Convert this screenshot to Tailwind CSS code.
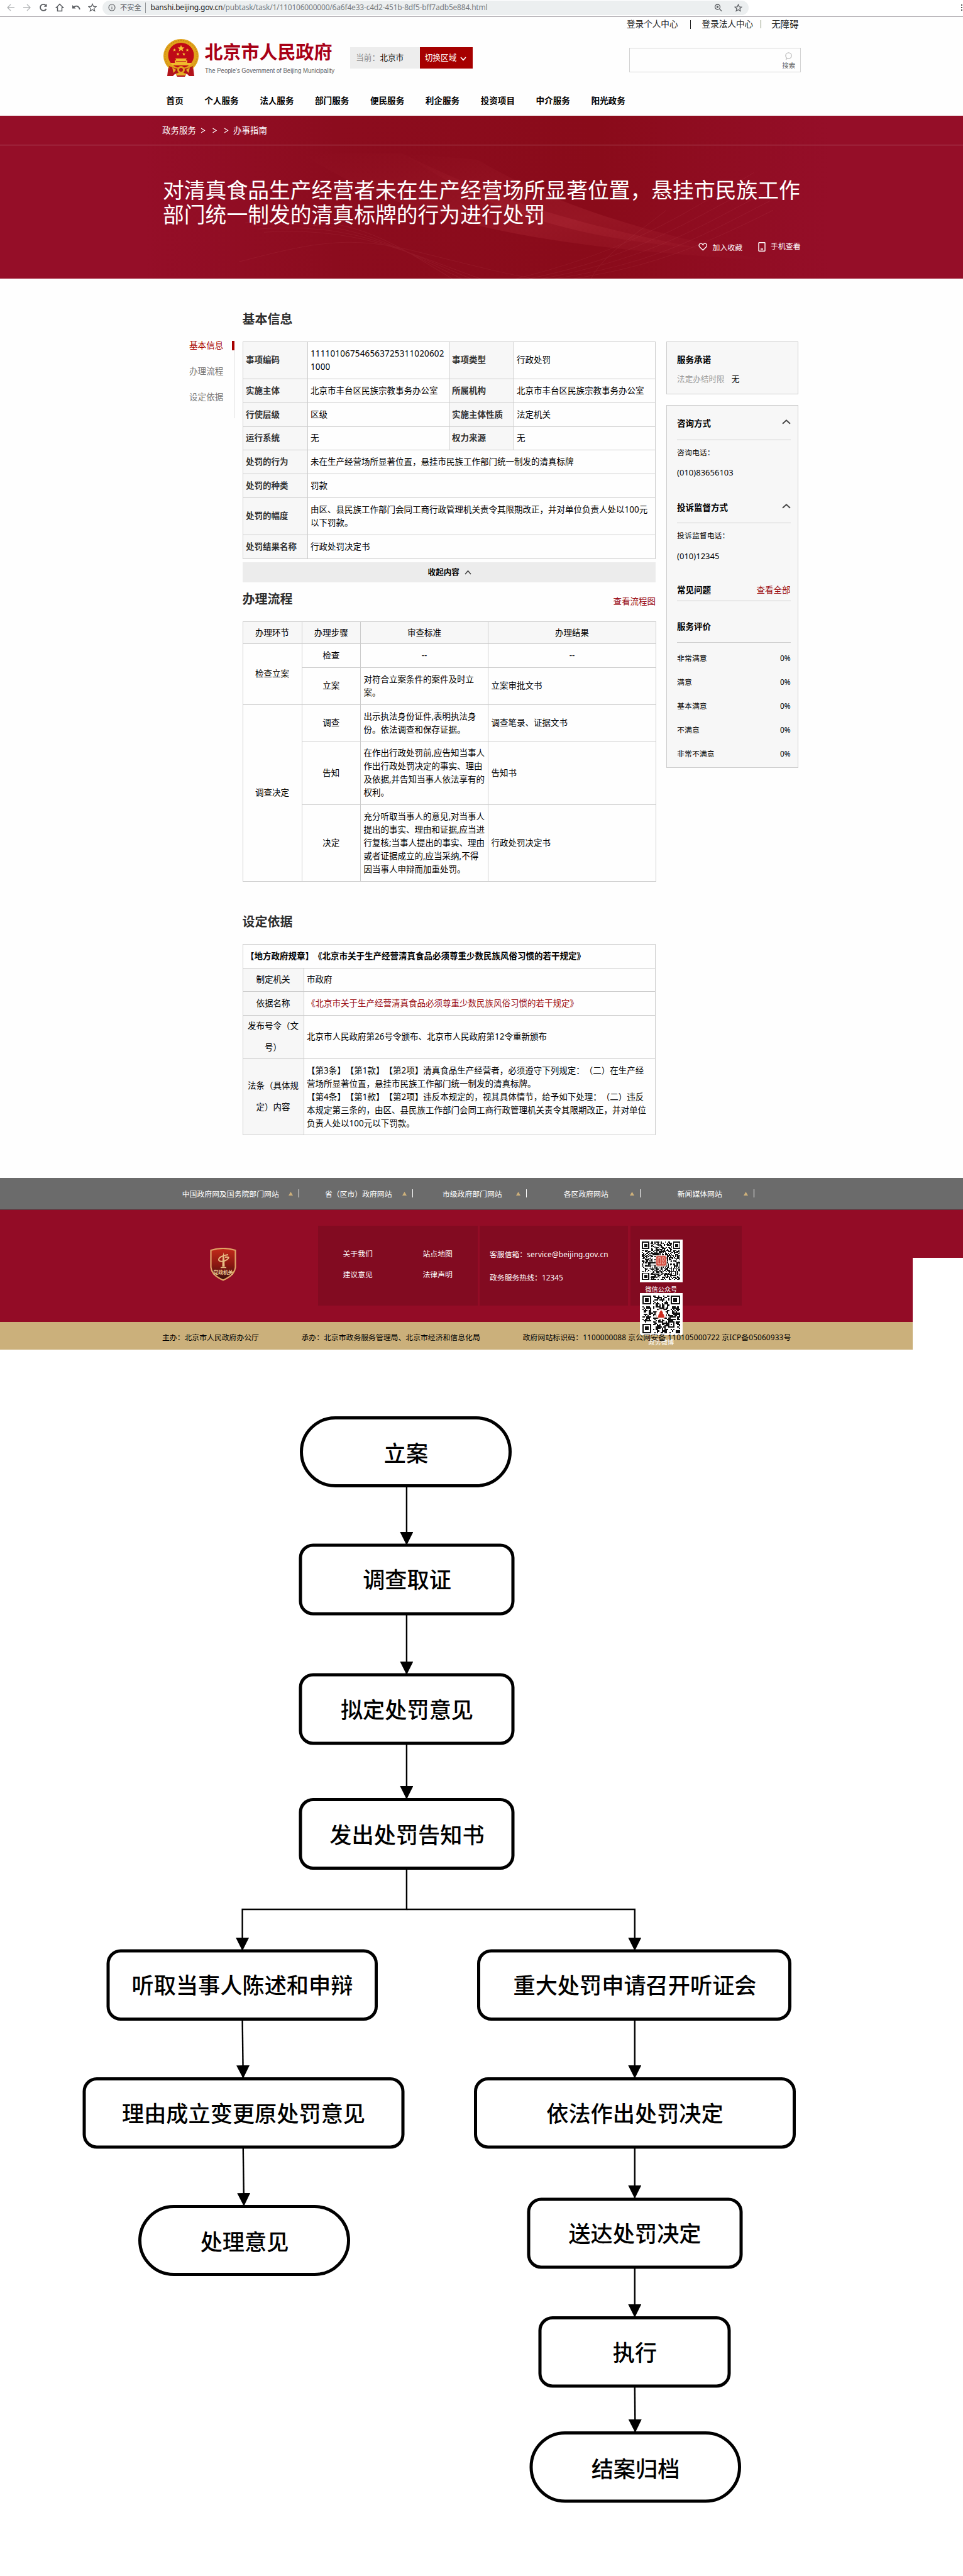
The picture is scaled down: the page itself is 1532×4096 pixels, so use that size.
<!DOCTYPE html>
<html lang="zh-CN">
<head>
<meta charset="utf-8">
<title>办事指南 - 北京市人民政府</title>
<script src="https://cdn.jsdelivr.net/npm/@tailwindcss/browser@4"></script>
</head>
<body class="w-[1532px] h-[4096px] overflow-hidden bg-[#fefefe] text-black font-['Noto_Sans','Noto_Sans_CJK_SC',sans-serif] [text-spacing-trim:space-all] whitespace-nowrap">

<!-- browser toolbar -->
<div class="flex h-[27px] items-start border-b border-[#a5a1a7] bg-white">
  <div class="flex h-[24px] w-[163px] items-center gap-[12px] pl-[10px] text-[#5a5d61]">
    <svg class="w-[14px] h-[14px] shrink-0 text-[#b4b6b8]" viewBox="0 0 14 14" fill="none" stroke="currentColor" stroke-width="1.4"><path d="M13 7H2M7 2L2 7l5 5"/></svg>
    <svg class="w-[14px] h-[14px] shrink-0 text-[#b4b6b8]" viewBox="0 0 14 14" fill="none" stroke="currentColor" stroke-width="1.4"><path d="M1 7h11M7 2l5 5-5 5"/></svg>
    <svg class="w-[14px] h-[14px] shrink-0" viewBox="0 0 14 14" fill="none" stroke="currentColor" stroke-width="1.8"><path d="M11.6 9A5 5 0 1 1 11 3.8"/><path d="M12.5 1v4.8H7.7z" fill="currentColor" stroke="none"/></svg>
    <svg class="w-[14px] h-[14px] shrink-0" viewBox="0 0 14 14" fill="none" stroke="currentColor" stroke-width="1.5"><path d="M7 1.5L1.5 7.2h2V12.500h7V7.200h2z"/></svg>
    <svg class="w-[14px] h-[14px] shrink-0" viewBox="0 0 14 14" fill="none" stroke="currentColor" stroke-width="1.8"><path d="M3 6.500C7 3 11.500 4.500 13 10"/><path d="M1 3v5.500h5.500z" fill="currentColor" stroke="none"/></svg>
    <svg class="w-[14px] h-[14px] shrink-0" viewBox="0 0 14 14" fill="none" stroke="currentColor" stroke-width="1.2"><path d="M7 1.300l1.700 3.900 4.200.4-3.200 2.800.95 4.100L7 10.300l-3.650 2.200.95-4.100L1.100 5.600l4.200-.4z"/></svg>
  </div>
  <div class="flex h-[23px] mt-[0.500px] w-[1028px] items-center rounded-full bg-[#eceff0] pl-[9px] pr-[10px]">
    <svg class="w-[12px] h-[12px] shrink-0 text-[#5a5d61]" viewBox="0 0 12 12" fill="none" stroke="currentColor" stroke-width="1.100"><circle cx="6" cy="6" r="5"/><path d="M6 5.200v3.600M6 3v1.200"/></svg>
    <span class="ml-[7px] text-[11.200px] text-[#5f6368]">不安全</span>
    <span class="ml-[6px] h-[17px] w-px bg-[#8f9396]"></span>
    <span class="ml-[8px] text-[12px] text-[#777b80] tracking-[-0.200px]"><span class="text-[#202124]">banshi.beijing.gov.cn</span>/pubtask/task/1/110106000000/6a6f4e33-c4d2-451b-8df5-bff7adb5e884.html</span>
    <span class="ml-auto flex items-center gap-[19px] text-[#5a5d61]">
      <svg class="w-[13px] h-[13px]" viewBox="0 0 13 13" fill="none" stroke="currentColor" stroke-width="1.300"><circle cx="5.500" cy="5" r="4"/><path d="M8.500 8l3.700 3.800M5.500 3.200v3.600M3.700 5h3.600"/></svg>
      <svg class="w-[13px] h-[13px]" viewBox="0 0 14 14" fill="none" stroke="currentColor" stroke-width="1.300"><path d="M7 1.300l1.700 3.900 4.200.4-3.200 2.800.95 4.100L7 10.300l-3.650 2.200.95-4.100L1.100 5.600l4.200-.4z"/></svg>
    </span>
  </div>
  <div class="ml-auto mr-[1px] flex flex-col gap-[2px] pt-[7px]"><i class="size-[2px] bg-[#555]"></i><i class="size-[2px] bg-[#555]"></i><i class="size-[2px] bg-[#555]"></i></div>
</div>

<!-- site header -->
<header class="flex h-[156.600px] flex-col">
  <div class="flex h-[23px] items-center pl-[997px] text-[13.600px] text-[#222]">
    <span>登录个人中心</span><i class="ml-[19px] h-[14px] w-px bg-[#222]"></i>
    <span class="ml-[18px]">登录法人中心</span><i class="ml-[12px] h-[13px] w-px bg-[#7d8a6a]"></i>
    <span class="ml-[16px] text-[14.500px]">无障碍</span>
  </div>
  <div class="flex h-[86px] items-start pl-[260px] pt-[12px]">
    <svg class="w-[56px] h-[60px] shrink-0" viewBox="0 0 56 60">
      <path d="M8 43L6 59h9l4-4 3 5h12l3-5 4 4h8l-2-16z" fill="#b3131b"/>
      <ellipse cx="28" cy="27" rx="28" ry="27" fill="#e0a21b"/>
      <ellipse cx="28" cy="27" rx="25.500" ry="24.500" fill="none" stroke="#b97b12" stroke-width="1" stroke-dasharray="2 2"/>
      <ellipse cx="28" cy="26" rx="20.500" ry="20" fill="#bf0a17"/>
      <path d="M28 9.500l1.500 3.700 4 .2-3.100 2.500 1.100 3.800L28 17.500l-3.500 2.200 1.100-3.800-3.100-2.500 4-.2z" fill="#f6c636"/>
      <g fill="#f6c636"><path id="s" d="M17.500 15l.7 1.700 1.800.1-1.400 1.200.5 1.700-1.600-1-1.600 1 .5-1.700-1.400-1.200 1.800-.1z"/><use href="#s" x="20.500"/><use href="#s" x="5.500" y="6.500"/><use href="#s" x="15" y="6.500"/></g>
      <path d="M19 31h18l-1.500 3h2.500v4h7l-3 4H14l-3-4h7v-4h2.500z" fill="#f0b92c"/>
      <path d="M20 35.500h16" stroke="#bf0a17" stroke-width=".8"/>
      <path d="M9 43q19 9 38 0l-1 8q-18 7-36 0z" fill="#b3131b"/>
      <circle cx="28" cy="49" r="6" fill="#e0a21b"/><circle cx="28" cy="49" r="3" fill="#b3131b"/>
      <path d="M14 45l6 4-4 5zM42 45l-6 4 4 5zM20 55l8-2 8 2v3H20z" fill="#e6ad26"/>
    </svg>
    <div class="ml-[9.500px] w-[231.700px] shrink-0">
      <div class="mt-[2px] h-[38px] text-[29px] leading-[38px] font-bold text-[#a80016]">北京市人民政府</div>
      <svg class="mt-[2px] h-[18px] w-[224px] overflow-visible"><text x="0" y="11.500" font-family="Liberation Sans" font-size="11" textLength="206" lengthAdjust="spacingAndGlyphs" fill="#666">The People's Government of Beijing Municipality</text></svg>
    </div>
    <div class="mt-[13px] flex h-[34px] shrink-0 items-center bg-[#ededed] text-[12.700px]">
      <div class="w-[110.500px] pl-[9px]"><span class="text-[#888]">当前：</span>北京市</div>
      <div class="flex h-full w-[84px] items-center bg-[#a60000] pl-[8px] text-white">切换区域<svg class="ml-[6px] mt-[2px] h-[7px] w-[10px]" viewBox="0 0 10 7" fill="none" stroke="#fff" stroke-width="1.600"><path d="M1 1l4 4.500L9 1"/></svg></div>
    </div>
    <div class="ml-[249.500px] mt-[13.800px] flex h-[39.500px] w-[273px] shrink-0 justify-end border border-[#d3d3d3] pr-[8px] pt-[6px]">
      <div class="flex flex-col items-center">
        <svg class="h-[13px] w-[11px]" viewBox="0 0 11 13" fill="none" stroke="#bbb" stroke-width="1.300"><circle cx="5.500" cy="5.500" r="4.600"/><path d="M3 9.300L1.300 12.300"/></svg>
        <span class="mt-[1px] text-[10.500px] leading-[15px] text-[#666]">搜索</span>
      </div>
    </div>
  </div>
  <nav class="flex gap-[33.500px] pl-[264.600px] pt-[14px] text-[13.600px] leading-[20px] font-bold">
    <span>首页</span><span>个人服务</span><span>法人服务</span><span>部门服务</span><span>便民服务</span><span>利企服务</span><span>投资项目</span><span>中介服务</span><span>阳光政务</span>
  </nav>
</header>

<!-- title banner -->
<section class="relative h-[259.400px] bg-[#950e28] text-white">
  <svg class="absolute inset-0 h-full w-full" viewBox="0 0 1532 259" preserveAspectRatio="none">
    <defs>
      <linearGradient id="bn" x1="0" x2="1"><stop offset=".15" stop-color="#950e28"/><stop offset=".35" stop-color="#8c0c1e"/><stop offset=".62" stop-color="#8a0b1a"/><stop offset=".86" stop-color="#950e28"/></linearGradient>
      <linearGradient id="sw" x1="0" x2="1" y1="0" y2="1"><stop offset="0" stop-color="#c8404a" stop-opacity="0"/><stop offset=".6" stop-color="#c8404a" stop-opacity=".2"/><stop offset="1" stop-color="#c8404a" stop-opacity="0"/></linearGradient>
    </defs>
    <rect width="1532" height="259" fill="url(#bn)"/>
    <path d="M480 60C650 170 860 210 1230 230C980 190 820 150 640 60z" fill="url(#sw)"/>
    <path d="M640 60C780 150 900 200 1180 215C1000 180 860 130 760 70z" fill="url(#sw)"/>
    <g fill="none" stroke="#d0606a" stroke-opacity=".12">
      <path d="M390 170C560 150 620 200 720 259M400 175C560 160 620 205 735 259M410 180C560 168 630 210 750 259M420 185C570 176 640 215 765 259M380 232C500 200 560 190 660 215S800 250 850 259"/>
      <path d="M820 259C1000 215 1080 160 1200 90M840 259C1010 225 1090 170 1215 105M860 259C1020 230 1100 185 1220 120M880 259C1030 238 1110 195 1225 135M910 259C1040 240 1120 205 1230 150M940 259C960 220 1010 190 1060 150"/>
    </g>
    <path d="M0 46.800h1532" stroke="#fff" stroke-opacity=".22"/>
  </svg>
  <div class="relative flex h-full flex-col">
    <div class="flex h-[47px] items-center pl-[257.900px] text-[13.500px]"><span>政务服务</span>
      <svg class="ml-[7px] h-[9px] w-[46px]" viewBox="0 0 46 9" fill="none" stroke="#fff" stroke-width="1.200"><path d="M1 1l5.500 3.500L1 8M19.500 1L25 4.500 19.500 8M38 1l5.500 3.500L38 8"/></svg>
      <span class="ml-[6px]">办事指南</span></div>
    <h1 class="mt-[52.500px] pl-[259px] text-[33.800px] leading-[38.400px]">对清真食品生产经营者未在生产经营场所显著位置，悬挂市民族工作<br>部门统一制发的清真标牌的行为进行处罚</h1>
    <div class="mt-[23px] flex items-center pl-[1110.500px] text-[11.900px] leading-[20px]">
      <svg class="h-[13px] w-[14.500px]" viewBox="0 0 15 13" fill="none" stroke="#fff" stroke-width="1.400"><path d="M7.500 12L2 6.500C0 4 1.500 1 4.200 1 6 1 7 2 7.500 3.200 8 2 9 1 10.800 1 13.500 1 15 4 13 6.500z"/></svg>
      <span class="ml-[8.500px]">加入收藏</span>
      <svg class="ml-[25px] h-[15px] w-[12px]" viewBox="0 0 12 15" fill="none" stroke="#fff" stroke-width="1.400"><rect x="1" y=".8" width="10" height="13.400" rx=".6"/><path d="M4 11h4" stroke-width="1.600"/></svg>
      <span class="ml-[8px] -mt-[3px]">手机查看</span>
    </div>
  </div>
</section>

<!-- page content -->
<main class="flex h-[1429.700px] pl-[301px]">
  <nav class="mt-[99px] h-[123px] w-[71.500px] border-r border-[#ddd] text-[13.600px] leading-[40.800px] text-[#777]">
    <div class="-mt-[13px] h-[40.800px] text-[#a60000] relative">基本信息<i class="absolute right-[-1px] top-[13px] h-[15.500px] w-[3.500px] bg-[#a60000]"></i></div>
    <div>办理流程</div>
    <div>设定依据</div>
  </nav>

  <div class="ml-[13px] w-[657.500px] text-[13.500px] leading-[21px]">
    <h2 class="pt-[45px] text-[20px] leading-[40px] font-bold text-[#2f2f2f]">基本信息</h2>
    <table class="mt-[14.600px] w-[656px] table-fixed border-collapse [&_td]:border [&_td]:border-[#ccc] [&_td]:py-0 [&_td]:pr-0 [&_td]:pl-[4.500px] [&_th]:border [&_th]:border-[#ccc] [&_th]:bg-[#f7f7f7] [&_th]:py-0 [&_th]:pr-0 [&_th]:pl-[4.500px] [&_th]:text-left [&_th]:font-bold [&_th]:text-[#333]">
      <colgroup><col class="w-[103px]"><col class="w-[225px]"><col class="w-[103px]"><col class="w-[225px]"></colgroup>
      <tr class="h-[59px]"><th>事项编码</th><td class="tracking-[0.150px]">111101067546563725311020602<br>1000</td><th>事项类型</th><td>行政处罚</td></tr>
      <tr class="h-[38px]"><th>实施主体</th><td>北京市丰台区民族宗教事务办公室</td><th>所属机构</th><td>北京市丰台区民族宗教事务办公室</td></tr>
      <tr class="h-[38px]"><th>行使层级</th><td>区级</td><th>实施主体性质</th><td>法定机关</td></tr>
      <tr class="h-[37.500px]"><th>运行系统</th><td>无</td><th>权力来源</th><td>无</td></tr>
      <tr class="h-[38px]"><th>处罚的行为</th><td colspan="3">未在生产经营场所显著位置，悬挂市民族工作部门统一制发的清真标牌</td></tr>
      <tr class="h-[38px]"><th>处罚的种类</th><td colspan="3">罚款</td></tr>
      <tr class="h-[58.500px]"><th>处罚的幅度</th><td colspan="3">由区、县民族工作部门会同工商行政管理机关责令其限期改正，并对单位负责人处以100元<br>以下罚款。</td></tr>
      <tr class="h-[38px]"><th>处罚结果名称</th><td colspan="3">行政处罚决定书</td></tr>
    </table>
    <div class="mt-[5px] flex h-[32.500px] items-center justify-center bg-[#ececec] pl-[2px] text-[12.600px] font-bold">收起内容<svg class="ml-[8px] h-[8px] w-[11px]" viewBox="0 0 11 8" fill="none" stroke="#444" stroke-width="1.600"><path d="M1 7l4.500-5.200L10 7"/></svg></div>

    <div class="mt-[6.500px] flex h-[40px] items-center justify-between"><h2 class="text-[20px] font-bold text-[#2f2f2f]">办理流程</h2><span class="pt-[8px] text-[#9a0a10]">查看流程图</span></div>
    <table class="mt-[15.700px] w-[657.500px] table-fixed border-collapse text-center [&_td]:border [&_td]:border-[#ccc] [&_td]:p-0 [&_th]:border [&_th]:border-[#ccc] [&_th]:bg-[#f7f7f7] [&_th]:p-0 [&_th]:font-normal">
      <colgroup><col class="w-[94px]"><col class="w-[93.500px]"><col class="w-[203px]"><col class="w-[267px]"></colgroup>
      <tr class="h-[34.600px]"><th>办理环节</th><th>办理步骤</th><th>审查标准</th><th>办理结果</th></tr>
      <tr class="h-[38px]"><td rowspan="2">检查立案</td><td>检查</td><td>--</td><td>--</td></tr>
      <tr class="h-[58.800px] [&>td:nth-child(n+2)]:text-left [&>td:nth-child(n+2)]:pl-[4.500px]"><td>立案</td><td>对符合立案条件的案件及时立<br>案。</td><td>立案审批文书</td></tr>
      <tr class="h-[58.800px] [&>td:nth-child(n+3)]:text-left [&>td:nth-child(n+3)]:pl-[4.500px]"><td rowspan="3">调查决定</td><td>调查</td><td>出示执法身份证件,表明执法身<br>份。依法调查和保存证据。</td><td>调查笔录、证据文书</td></tr>
      <tr class="h-[100.600px] [&>td:nth-child(n+2)]:text-left [&>td:nth-child(n+2)]:pl-[4.500px]"><td>告知</td><td>在作出行政处罚前,应告知当事人<br>作出行政处罚决定的事实、理由<br>及依据,并告知当事人依法享有的<br>权利。</td><td>告知书</td></tr>
      <tr class="h-[121.600px] [&>td:nth-child(n+2)]:text-left [&>td:nth-child(n+2)]:pl-[4.500px]"><td>决定</td><td>充分听取当事人的意见,对当事人<br>提出的事实、理由和证据,应当进<br>行复核;当事人提出的事实、理由<br>或者证据成立的,应当采纳,不得<br>因当事人申辩而加重处罚。</td><td>行政处罚决定书</td></tr>
    </table>

    <h2 class="mt-[44px] text-[20px] leading-[40px] font-bold text-[#2f2f2f]">设定依据</h2>
    <table class="mt-[15px] w-[656px] table-fixed border-collapse [&_td]:border [&_td]:border-[#ccc] [&_td]:py-0 [&_td]:pr-0 [&_td]:pl-[4.500px] [&_th]:border [&_th]:border-[#ccc] [&_th]:bg-[#f7f7f7] [&_th]:p-0 [&_th]:font-normal [&_th]:leading-[33.800px]">
      <colgroup><col class="w-[97px]"><col class="w-[559px]"></colgroup>
      <tr class="h-[38px]"><td colspan="2" class="font-bold">【地方政府规章】《北京市关于生产经营清真食品必须尊重少数民族风俗习惯的若干规定》</td></tr>
      <tr class="h-[37.500px]"><th>制定机关</th><td>市政府</td></tr>
      <tr class="h-[38px]"><th>依据名称</th><td class="text-[#9a0a10]">《北京市关于生产经营清真食品必须尊重少数民族风俗习惯的若干规定》</td></tr>
      <tr class="h-[68.500px]"><th>发布号令（文<br>号）</th><td>北京市人民政府第26号令颁布、北京市人民政府第12令重新颁布</td></tr>
      <tr class="h-[121.600px]"><th>法条（具体规<br>定）内容</th><td>【第3条】【第1款】【第2项】清真食品生产经营者，必须遵守下列规定：（二）在生产经<br>营场所显著位置，悬挂市民族工作部门统一制发的清真标牌。<br>【第4条】【第1款】【第2项】违反本规定的，视其具体情节，给予如下处理：（二）违反<br>本规定第三条的，由区、县民族工作部门会同工商行政管理机关责令其限期改正，并对单位<br>负责人处以100元以下罚款。</td></tr>
    </table>
  </div>

  <aside class="ml-[16.600px] w-[210.500px] pt-[100px] text-[11.900px]">
    <div class="h-[84.500px] border border-[#ccc] bg-[#f7f7f7] pl-[16.500px] pt-[18.500px]">
      <h3 class="text-[13.500px] leading-[20px] font-bold">服务承诺</h3>
      <p class="mt-[11px] text-[12.600px] leading-[20px]"><span class="mr-[11px] text-[#999]">法定办结时限</span>无</p>
    </div>
    <div class="mt-[17px] h-[576.500px] border border-[#ccc] bg-[#f7f7f7] pl-[16.500px] pr-[11.500px] leading-[20px]">
      <div class="flex h-[54.500px] items-center justify-between border-b border-[#ccc] pt-[2px]"><h3 class="text-[13.500px] font-bold">咨询方式</h3><svg class="-mt-[5px] h-[9px] w-[14px]" viewBox="0 0 14 9" fill="none" stroke="#444" stroke-width="1.900"><path d="M1 7.800l6-5.600 6 5.600"/></svg></div>
      <p class="pt-[9px]">咨询电话：</p>
      <p class="mt-[12.500px] text-[13px]">(010)83656103</p>
      <div class="mt-[17px] flex h-[54px] items-center justify-between border-b border-[#ccc] pt-[4px]"><h3 class="text-[13.500px] font-bold">投诉监督方式</h3><svg class="-mt-[4px] h-[9px] w-[14px]" viewBox="0 0 14 9" fill="none" stroke="#444" stroke-width="1.900"><path d="M1 7.800l6-5.600 6 5.600"/></svg></div>
      <p class="pt-[9px]">投诉监督电话：</p>
      <p class="mt-[12.500px] text-[13px]">(010)12345</p>
      <div class="mt-[25px] flex h-[37.500px] items-center justify-between border-b border-[#ccc] pt-[2.500px] text-[13.500px]"><h3 class="font-bold">常见问题</h3><span class="text-[#9a0a10]">查看全部</span></div>
      <div class="flex h-[66px] items-center border-b border-[#ccc] pt-[15px] text-[13.500px]"><h3 class="font-bold">服务评价</h3></div>
      <div class="flex flex-col gap-[18px] pt-[14px]">
        <p class="flex justify-between"><span>非常满意</span><span>0%</span></p>
        <p class="flex justify-between"><span>满意</span><span>0%</span></p>
        <p class="flex justify-between"><span>基本满意</span><span>0%</span></p>
        <p class="flex justify-between"><span>不满意</span><span>0%</span></p>
        <p class="flex justify-between"><span>非常不满意</span><span>0%</span></p>
      </div>
    </div>
  </aside>
</main>

<!-- footer -->
<footer class="relative text-[11.850px] leading-[20px] text-white">
  <div class="h-[51px] border-b border-[#5c2a34] bg-[#6b6b6b]">
    <div class="grid h-full grid-cols-[218px_181px_181px_181px_181px] pl-[258px] [&>div]:flex [&>div]:items-center [&>div]:justify-end [&_b]:font-normal [&_b]:flex-1 [&_b]:text-center [&_svg]:w-[7px] [&_svg]:h-[6px] [&_svg]:mr-[9.500px] [&_i]:h-[13px] [&_i]:w-px [&_i]:bg-white">
      <div><b class="pl-[17px]">中国政府网及国务院部门网站</b><svg viewBox="0 0 7 6"><path d="M3.500 0L7 6H0z" fill="#cdb07a"/></svg><i></i></div>
      <div><b class="pl-[25px]">省（区市）政府网站</b><svg viewBox="0 0 7 6"><path d="M3.500 0L7 6H0z" fill="#cdb07a"/></svg><i></i></div>
      <div><b class="pl-[25px]">市级政府部门网站</b><svg viewBox="0 0 7 6"><path d="M3.500 0L7 6H0z" fill="#cdb07a"/></svg><i></i></div>
      <div><b class="pl-[25px]">各区政府网站</b><svg viewBox="0 0 7 6"><path d="M3.500 0L7 6H0z" fill="#cdb07a"/></svg><i></i></div>
      <div><b class="pl-[25px]">新闻媒体网站</b><svg viewBox="0 0 7 6"><path d="M3.500 0L7 6H0z" fill="#cdb07a"/></svg><i></i></div>
    </div>
  </div>
  <div class="flex h-[178.600px] bg-[#930c26] pl-[334px] pt-[25.800px]">
    <svg class="mt-[35px] h-[53px] w-[42px]" viewBox="0 0 42 53">
      <defs><linearGradient id="sh" x2="0" y2="1"><stop offset="0" stop-color="#c32a1a"/><stop offset=".5" stop-color="#8c1712"/><stop offset="1" stop-color="#3a0f0c"/></linearGradient></defs>
      <path d="M1.500 4Q21-2 40.500 4v27Q39 44 21 51.500 3 44 1.500 31z" fill="url(#sh)" stroke="#e0a467" stroke-width="2.200"/>
      <path d="M19.500 30h4l-.6-14-1.400-9-1.400 9z" fill="#e8bd84"/><path d="M17 31.500h9" stroke="#e8bd84" stroke-width="1.500"/>
      <path d="M29 11c-8 1-15 4-15 8s9 3 13 0 4-5-3-4" fill="none" stroke="#e8bd84" stroke-width="2"/>
      <text x="21" y="42" text-anchor="middle" font-size="7.800" font-weight="700" fill="#ecc793">党政机关</text>
    </svg>
    <div class="ml-[130px] grid h-[126.800px] w-[254px] grid-cols-[127px_127px] content-start gap-y-[12.700px] bg-[#820b21] pl-[39.500px] pt-[33.500px]"><span>关于我们</span><span>站点地图</span><span>建议意见</span><span>法律声明</span></div>
    <div class="ml-[3px] h-[126.800px] w-[236px] bg-[#820b21] pl-[16px] pt-[35px]"><p>客服信箱：<span class="tracking-[0.150px]">service@beijing.gov.cn</span></p><p class="mt-[16.500px]">政务服务热线：12345</p></div>
    <div class="ml-[3.500px] h-[126.800px] w-[177.500px] bg-[#820b21] pl-[15.500px] pt-[21.500px] text-[10.200px]">
      <div class="flex w-[67.700px] flex-col items-center">
        <svg id="qr1" class="h-[67.700px] w-[67.700px] shrink-0" viewBox="0 0 41 41" shape-rendering="crispEdges"></svg>
        <span class="mt-[3px] mb-[-1px] h-[15px] leading-[17px]">微信公众号</span>
        <svg id="qr2" class="h-[67.700px] w-[67.700px] shrink-0" viewBox="0 0 33 33" shape-rendering="crispEdges"></svg>
        <span class="relative z-10 mt-[2px] leading-[19px]">政务微博</span>
      </div>
    </div>
  </div>
  <div class="absolute right-0 top-[127.300px] h-[149px] w-[79.800px] bg-white"></div>
  <div class="flex h-[43.500px] w-[1452px] items-center bg-[#cbb07b] pl-[258px] pt-[4px] text-black">
    <span class="w-[221.500px]">主办：北京市人民政府办公厅</span><span class="w-[352px]">承办：北京市政务服务管理局、北京市经济和信息化局</span><span class="relative z-10 tracking-[0.120px]">政府网站标识码：1100000088 京公网安备 110105000722 京ICP备05060933号</span>
  </div>
</footer>

<!-- process diagram -->
<section class="relative h-[1950px] bg-white text-[35.200px] font-medium">
  <svg class="absolute left-0 top-0 h-[1950px] w-[1532px]" viewBox="0 2146 1532 1950" fill="none" stroke="#000" stroke-width="2.400">
    <defs><marker id="ah" markerUnits="userSpaceOnUse" markerWidth="21" markerHeight="21" refX="20" refY="10.500" orient="auto"><path d="M0 0L21 10.500L0 21z" fill="#000" stroke="none"/></marker></defs>
    <g marker-end="url(#ah)">
      <path d="M646.900 2364V2456"/><path d="M646.900 2568V2662"/><path d="M646.900 2774V2860"/>
      <path d="M646.900 2972V3036H385.600V3101"/><path d="M646.900 3036H1009.800V3101"/>
      <path d="M385.600 3212L386.800 3304"/><path d="M386.800 3416L388 3507"/>
      <path d="M1009.800 3212V3304"/><path d="M1009.800 3416V3495"/><path d="M1009.800 3606V3684"/><path d="M1009.800 3796L1010.500 3867"/>
    </g>
    <g stroke-width="5" fill="#fff">
      <rect x="479.500" y="2254.500" width="332" height="108" rx="54"/>
      <rect x="478" y="2457" width="338" height="109" rx="20"/>
      <rect x="478" y="2663" width="338" height="109" rx="20"/>
      <rect x="478" y="2861.500" width="338" height="109" rx="20"/>
      <rect x="172" y="3102" width="426.500" height="108.500" rx="20"/>
      <rect x="761.500" y="3102" width="495" height="108.500" rx="20"/>
      <rect x="134" y="3305.500" width="507" height="108.500" rx="20"/>
      <rect x="756.500" y="3305.500" width="507" height="108.500" rx="20"/>
      <rect x="222.500" y="3508.500" width="332" height="108" rx="54"/>
      <rect x="841" y="3497" width="338" height="108" rx="20"/>
      <rect x="859" y="3685.500" width="301" height="108.500" rx="20"/>
      <rect x="845" y="3868.500" width="331.500" height="108.500" rx="54"/>
    </g>
    <g fill="#000" stroke="none" text-anchor="middle">
      <text x="646" y="2323.500">立案</text><text x="647.500" y="2525">调查取证</text><text x="647.500" y="2731.500">拟定处罚意见</text><text x="647.500" y="2931">发出处罚告知书</text>
      <text x="385.500" y="3170">听取当事人陈述和申辩</text><text x="1010" y="3170">重大处罚申请召开听证会</text>
      <text x="387.500" y="3373.500">理由成立变更原处罚意见</text><text x="1010" y="3373.500">依法作出处罚决定</text>
      <text x="389" y="3578">处理意见</text><text x="1010" y="3565">送达处罚决定</text><text x="1010" y="3754">执行</text><text x="1011" y="3938.500">结案归档</text>
    </g>
  </svg>
</section>

<script>
  // Draws a QR-style matrix of n modules with quiet zone and a centre badge.
  function drawCode(id, n, seed, badge) {
    var size = n + 4, d = '', s = seed;
    function rnd() { s = (s * 1103515245 + 12345) & 0x7fffffff; return (s >> 8 & 1023) / 1023; }
    function finder(x, y) { return 'M' + x + ' ' + y + 'h7v7h-7zm1 1v5h5v-5zm1 1h3v3h-3z'; }
    for (var y = 0; y < n; y++) for (var x = 0; x < n; x++) {
      var corner = (x < 8 && y < 8) || (x > n - 9 && y < 8) || (x < 8 && y > n - 9);
      var align = x > n - 10 && x < n - 3 && y > n - 10 && y < n - 3;
      if (rnd() < 0.5 && !corner && !align) d += 'M' + (x + 2) + ' ' + (y + 2) + 'h1v1h-1z';
    }
    var a = n - 7;
    d += finder(2, 2) + finder(n - 5, 2) + finder(2, n - 5) + 'M' + a + ' ' + a + 'h5v5h-5zm1 1v3h3v-3zm1 1h1v1h-1z';
    document.getElementById(id).innerHTML = '<rect width="' + size + '" height="' + size + '" fill="#fff"/><path fill-rule="evenodd" fill="#111" d="' + d + '"/>' + badge;
  }
  drawCode('qr1', 37, 77, '<g shape-rendering="auto"><rect x="15.500" y="15.500" width="10" height="10" rx="1.500" fill="#d2483c" stroke="#f0d0c8" stroke-width=".7"/><path d="M17.500 17.500h2.500v6h-2.500zM21.500 17.500h2v2.500h-2zM21.500 21.500h2v2h-2z" fill="none" stroke="#f3c9bd" stroke-width=".6"/></g>');
  drawCode('qr2', 29, 131, '<g shape-rendering="auto"><circle cx="16.500" cy="16.500" r="4" fill="#fff" stroke="#e3b8b0" stroke-width=".4"/><path d="M16.500 13.200l1.600 2.200h-.6l1.500 2h-.6l1 1.700h-5.800l1-1.700h-.6l1.500-2h-.6z" fill="#cf2a1e"/></g>');
</script>
</body>
</html>
